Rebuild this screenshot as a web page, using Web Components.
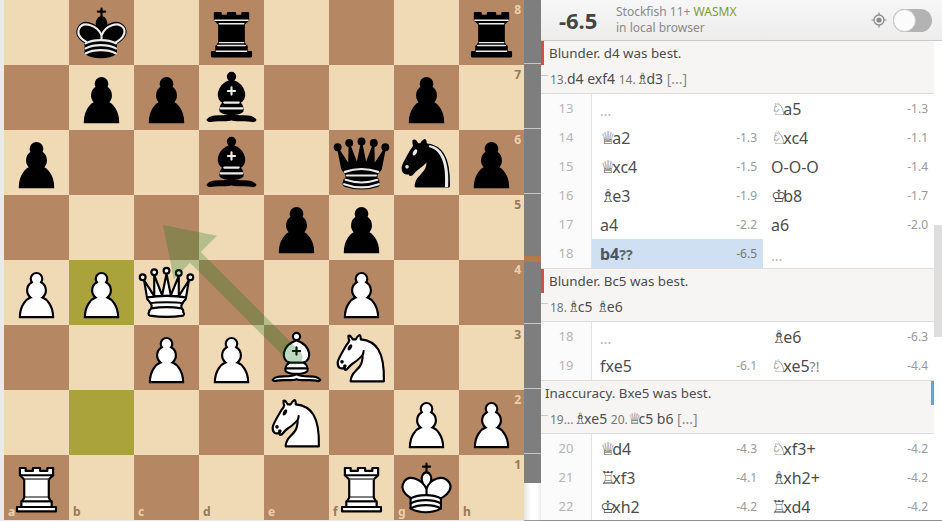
<!DOCTYPE html>
<html>
<head>
<meta charset="utf-8">
<title>Analysis</title>
<style>
  html, body { margin: 0; height: 521px; overflow: hidden; background: #e9eaee; }
  body { display: flex; font-family: "Noto Sans", "DejaVu Sans", sans-serif; color: #4d4d4d; }
</style>
</head>
<body>
<chess-board fen="1k1r3r/1ppb2p1/p2b1qnp/4pp2/PPQ2P2/2PPBN2/4N1PP/R4RK1"></chess-board>
<eval-gauge></eval-gauge>
<analysis-panel>
  <engine-header slot="header" score="-6.5"></engine-header>

  <move-comment kind="blunder" first title="Blunder. d4 was best.">
    <ply-num>13.</ply-num>d4 exf4 <ply-num>14.</ply-num><fig-piece>♗</fig-piece>d3 <ply-num fade>[...]</ply-num>
  </move-comment>
  <move-row n="13"><move-cell empty>...</move-cell><move-cell score="-1.3"><fig-piece>♘</fig-piece>a5</move-cell></move-row>
  <move-row n="14"><move-cell score="-1.3"><fig-piece>♕</fig-piece>a2</move-cell><move-cell score="-1.1"><fig-piece>♘</fig-piece>xc4</move-cell></move-row>
  <move-row n="15"><move-cell score="-1.5"><fig-piece>♕</fig-piece>xc4</move-cell><move-cell score="-1.4">O-O-O</move-cell></move-row>
  <move-row n="16"><move-cell score="-1.9"><fig-piece>♗</fig-piece>e3</move-cell><move-cell score="-1.7"><fig-piece>♔</fig-piece>b8</move-cell></move-row>
  <move-row n="17"><move-cell score="-2.2">a4</move-cell><move-cell score="-2.0">a6</move-cell></move-row>
  <move-row n="18"><move-cell score="-6.5" active glyph="??">b4</move-cell><move-cell empty>...</move-cell></move-row>

  <move-comment kind="blunder" title="Blunder. Bc5 was best.">
    <ply-num>18.</ply-num><fig-piece>♗</fig-piece>c5 <fig-piece>♗</fig-piece>e6
  </move-comment>
  <move-row n="18"><move-cell empty>...</move-cell><move-cell score="-6.3"><fig-piece>♗</fig-piece>e6</move-cell></move-row>
  <move-row n="19"><move-cell score="-6.1">fxe5</move-cell><move-cell score="-4.4" glyph="?!"><fig-piece>♘</fig-piece>xe5</move-cell></move-row>

  <move-comment kind="inaccuracy" title="Inaccuracy. Bxe5 was best.">
    <ply-num>19...</ply-num><fig-piece>♗</fig-piece>xe5 <ply-num>20.</ply-num><fig-piece>♕</fig-piece>c5 b6 <ply-num fade>[...]</ply-num>
  </move-comment>
  <move-row n="20"><move-cell score="-4.3"><fig-piece>♕</fig-piece>d4</move-cell><move-cell score="-4.2"><fig-piece>♘</fig-piece>xf3+</move-cell></move-row>
  <move-row n="21"><move-cell score="-4.1"><fig-piece>♖</fig-piece>xf3</move-cell><move-cell score="-4.2"><fig-piece>♗</fig-piece>xh2+</move-cell></move-row>
  <move-row n="22"><move-cell score="-4.2"><fig-piece>♔</fig-piece>xh2</move-cell><move-cell score="-4.2"><fig-piece>♖</fig-piece>xd4</move-cell></move-row>
</analysis-panel>

<script>
const outline = 'fill-rule="evenodd" stroke="#000" stroke-width="1.5" stroke-linecap="round" stroke-linejoin="round"';
const pawnPath = 'M22.5 9c-2.21 0-4 1.79-4 4 0 .89.29 1.71.78 2.38C17.33 16.5 16 18.59 16 21c0 2.03.94 3.84 2.41 5.03-3 1.06-7.41 5.55-7.41 13.47h23c0-7.92-4.41-12.41-7.41-13.47 1.47-1.19 2.41-3 2.41-5.03 0-2.41-1.33-4.5-3.28-5.62.49-.67.78-1.49.78-2.38 0-2.21-1.79-4-4-4z';
const knightBody = 'M22 10c10.5 1 16.5 8 16 29H15c0-9 10-6.5 8-21';
const knightHead = 'M24 18c.38 2.91-5.55 7.37-8 9-3 2-2.82 4.34-5 4-1.042-.94 1.41-3.04 0-3-1 0 .19 1.23-1 2-1 0-4.003 1-4-4 0-2 6-12 6-12s1.89-1.9 2-3.5c-.73-.994-.5-2-.5-3 1-1 3 2.5 3 2.5h2s.78-1.992 2.5-3c1 0 1 3 1 3';
const knightEye = 'M9.5 25.5a.5.5 0 1 1-1 0 .5.5 0 1 1 1 0zm5.433-9.75a.5 1.5 30 1 1-.866-.5.5 1.5 30 1 1 .866.5z';
const bishopBase = 'M9 36c3.39-.97 10.11.43 13.5-2 3.39 2.43 10.11 1.03 13.5 2 0 0 1.65.54 3 2-.68.97-1.65.99-3 .5-3.39-.97-10.11.46-13.5-1-3.39 1.46-10.11.03-13.5 1-1.354.49-2.323.47-3-.5 1.354-1.94 3-2 3-2z';
const bishopBody = 'M15 32c2.5 2.5 12.5 2.5 15 0 .5-1.5 0-2 0-2 0-2.5-2.5-4-2.5-4 5.5-1.5 6-11.5-5-15.5-11 4-10.5 14-5 15.5 0 0-2.5 1.5-2.5 4 0 0-.5.5 0 2z';
const bishopTop = 'M25 8a2.5 2.5 0 1 1-5 0 2.5 2.5 0 1 1 5 0z';
const bishopMarks = 'M17.5 26h10M15 30h15m-7.5-14.5v5M20 18h5';
const queenSkirt = 'M9 26c0 2 1.5 2 2.5 4 1 1.5 1 1 .5 3.5-1.5 1-1.5 2.5-1.5 2.5-1.5 1.5.5 2.5.5 2.5 6.5 1 16.5 1 23 0 0 0 1.5-1 0-2.5 0 0 .5-1.5-1-2.5-.5-2.5-.5-2 .5-3.5 1-2 2.5-2 2.5-4-8.5-1.5-18.5-1.5-27 0z';
const kingHead = 'M22.5 25s4.5-7.5 3-10.5c0 0-1-2.5-3-2.5s-3 2.5-3 2.5c-1.5 3 3 10.5 3 10.5';
const kingBody = 'M11.5 37c5.5 3.5 15.5 3.5 21 0v-7s9-4.5 6-10.5c-4-6.5-13.5-3.5-16 4V27v-3.5c-3.5-7.5-13-10.5-16-4-3 6 5 10 5 10V37z';
const kingBands = 'M11.5 30c5.5-3 15.5-3 21 0m-21 3.5c5.5-3 15.5-3 21 0m-21 3.5c5.5-3 15.5-3 21 0';

const PIECES = {
  P: `<path d="${pawnPath}" fill="#fff" stroke="#000" stroke-width="1.5" stroke-linecap="round"/>`,
  p: `<path d="${pawnPath}" fill="#000" stroke="#000" stroke-width="1.5" stroke-linecap="round"/>`,
  R: `<g fill="#fff" ${outline}><path d="M9 39h27v-3H9v3zM12 36v-4h21v4H12zM11 14V9h4v2h5V9h5v2h5V9h4v5" stroke-linecap="butt"/><path d="M34 14l-3 3H14l-3-3"/><path d="M31 17v12.5H14V17" stroke-linecap="butt" stroke-linejoin="miter"/><path d="M31 29.5l1.5 2.5h-20l1.5-2.5"/><path d="M11 14h23" fill="none" stroke-linejoin="miter"/></g>`,
  r: `<g ${outline}><path d="M9 39h27v-3H9v3zM12.5 32l1.5-2.5h17l1.5 2.5h-20zM12 36v-4h21v4H12z" stroke-linecap="butt"/><path d="M14 29.5v-13h17v13H14z" stroke-linecap="butt" stroke-linejoin="miter"/><path d="M14 16.5L11 14h23l-3 2.5H14zM11 14V9h4v2h5V9h5v2h5V9h4v5H11z" stroke-linecap="butt"/><path d="M12 35.5h21M13 31.5h19M14 29.5h17M14 16.5h17M11 14h23" fill="none" stroke="#ececec" stroke-width="1" stroke-linejoin="miter"/></g>`,
  B: `<g fill="none" ${outline}><g fill="#fff" stroke-linecap="butt"><path d="${bishopBase}"/><path d="${bishopBody}"/><path d="${bishopTop}"/></g><path d="${bishopMarks}" stroke-linejoin="miter"/></g>`,
  b: `<g fill="none" ${outline}><g fill="#000" stroke-linecap="butt"><path d="${bishopBase}"/><path d="${bishopBody}"/><path d="${bishopTop}"/></g><path d="${bishopMarks}" stroke="#ececec" stroke-linejoin="miter"/></g>`,
  N: `<g fill="none" ${outline}><path d="${knightBody}" fill="#fff"/><path d="${knightHead}" fill="#fff"/><path d="${knightEye}" fill="#000"/></g>`,
  n: `<g fill="none" ${outline}><path d="${knightBody}" fill="#000"/><path d="${knightHead}" fill="#000"/><path d="${knightEye}" fill="#ececec" stroke="#ececec"/><path d="M24.55 10.4l-.45 1.45.5.15c3.15 1 5.65 2.49 7.9 6.75S35.75 29.06 35.25 39l-.05.5h2.25l.05-.5c.5-10.06-.88-16.85-3.25-21.34-2.37-4.49-5.79-6.64-9.19-7.16l-.51-.1z" fill="#ececec" stroke="none"/></g>`,
  Q: `<g fill="#fff" ${outline}><path d="M8 12a2 2 0 1 1-4 0 2 2 0 1 1 4 0zM24.5 7.5a2 2 0 1 1-4 0 2 2 0 1 1 4 0zM41 12a2 2 0 1 1-4 0 2 2 0 1 1 4 0zM16 8.5a2 2 0 1 1-4 0 2 2 0 1 1 4 0zM33 9a2 2 0 1 1-4 0 2 2 0 1 1 4 0z"/><path d="M9 26c8.5-1.5 21-1.5 27 0l2-12-7 11V11l-5.5 13.5-3-15-3 15-5.5-14V25L7 14l2 12z" stroke-linecap="butt"/><path d="${queenSkirt}" stroke-linecap="butt"/><path d="M11.5 30c3.5-1 18.5-1 22 0M12 33.5c6-1 15-1 21 0" fill="none"/></g>`,
  q: `<g ${outline}><g stroke="none"><circle cx="6" cy="12" r="2.75"/><circle cx="14" cy="9" r="2.75"/><circle cx="22.5" cy="8" r="2.75"/><circle cx="31" cy="9" r="2.75"/><circle cx="39" cy="12" r="2.75"/></g><path d="M9 26c8.5-1.5 21-1.5 27 0l2.5-12.5L31 25l-.3-14.1-5.2 13.6-3-14.5-3 14.5-5.2-13.6L14 25 6.5 13.5 9 26z" stroke-linecap="butt"/><path d="${queenSkirt}" stroke-linecap="butt"/><path d="M11 38.5a35 35 1 0 0 23 0" fill="none" stroke-linecap="butt"/><path d="M11 29a35 35 1 0 1 23 0M12.5 31.5h20M11.5 34.5a35 35 1 0 0 22 0M10.5 37.5a35 35 1 0 0 24 0" fill="none" stroke="#ececec"/></g>`,
  K: `<g fill="none" ${outline}><path d="M22.5 11.63V6M20 8h5" stroke-linejoin="miter"/><path d="${kingHead}" fill="#fff" stroke-linecap="butt" stroke-linejoin="miter"/><path d="${kingBody}" fill="#fff"/><path d="${kingBands}"/></g>`,
  k: `<g fill="none" ${outline}><path d="M22.5 11.63V6" stroke-linejoin="miter"/><path d="${kingHead}" fill="#000" stroke-linecap="butt" stroke-linejoin="miter"/><path d="${kingBody}" fill="#000"/><path d="M20 8h5" stroke-linejoin="miter"/><path d="M32 29.5s8.5-4 6.03-9.65C34.15 14 25 18 22.5 24.5l.01 2.1-.01-2.1C20 18 9.906 14 6.997 19.85c-2.497 5.65 4.853 9 4.853 9" stroke="#ececec"/><path d="${kingBands}" stroke="#ececec"/></g>`
};

class ChessPiece extends HTMLElement {
  constructor() {
    super();
    this.shadow = this.attachShadow({ mode: "open" });
    this.shadow.innerHTML = `
      <style>
        :host { display: block; width: 65px; height: 65px; }
        svg { display: block; width: 65px; height: 65px; }
      </style>
      <svg viewBox="0 0 45 45">${PIECES[this.getAttribute('type')]}</svg>
    `;
  }
}
customElements.define('chess-piece', ChessPiece);

class BoardSquare extends HTMLElement {
  constructor() {
    super();
    this.shadow = this.attachShadow({ mode: "open" });
    const rank = this.getAttribute('rank');
    const file = this.getAttribute('file');
    this.shadow.innerHTML = `
      <style>
        :host { display: block; position: relative; width: 65px; height: 65px; background: #f0d9b5; --coord: #8f6f52; }
        :host([dark]) { background: #b58863; --coord: #f0d9b5; }
        :host([last]) { background: #aaa23a; }
        .coord { position: absolute; font: bold 12px/12px "Noto Sans", sans-serif; color: var(--coord); opacity: .9; }
        .rank { top: 4px; right: 3px; }
        .file { bottom: 2px; left: 4px; }
      </style>
      <slot></slot>
      ${rank ? `<span class="coord rank">${rank}</span>` : ''}
      ${file ? `<span class="coord file">${file}</span>` : ''}
    `;
  }
}
customElements.define('board-square', BoardSquare);

class ChessBoard extends HTMLElement {
  constructor() {
    super();
    this.shadow = this.attachShadow({ mode: "open" });
    const files = 'abcdefgh';
    let squares = '';
    this.getAttribute('fen').split('/').forEach((row, r) => {
      const cells = row.replace(/\d/g, d => '.'.repeat(+d));
      [...cells].forEach((c, f) => {
        let attrs = '';
        if ((r + f) % 2 === 1) attrs += ' dark';
        if (f === 7) attrs += ` rank="${8 - r}"`;
        if (r === 7) attrs += ` file="${files[f]}"`;
        if (f === 1 && (r === 4 || r === 6)) attrs += ' last';
        squares += `<board-square${attrs}>${c !== '.' ? `<chess-piece type="${c}"></chess-piece>` : ''}</board-square>`;
      });
    });
    this.shadow.innerHTML = `
      <style>
        :host { display: block; position: relative; flex: none; width: 520px; height: 520px; margin-left: 4px; }
        .grid { display: grid; grid-template-columns: repeat(8, 65px); grid-auto-rows: 65px; }
        svg { position: absolute; left: -4px; top: 0; width: 528px; height: 520px; pointer-events: none; }
      </style>
      <div class="grid">${squares}</div>
      <svg viewBox="0 0 528 520">
        <g opacity=".27">
          <line x1="295" y1="357" x2="195.4" y2="257.4" stroke="#15781b" stroke-width="15.2" stroke-linecap="round"/>
          <polygon points="163,225 217,235.8 173.8,279" fill="#15781b"/>
        </g>
      </svg>
    `;
  }
}
customElements.define('chess-board', ChessBoard);

class EvalGauge extends HTMLElement {
  constructor() {
    super();
    this.shadow = this.attachShadow({ mode: "open" });
    this.shadow.innerHTML = `
      <style>
        :host { display: flex; flex-direction: column; position: relative; flex: none; width: 17px; height: 520px; border-bottom: 1px solid #999; }
        .black { height: 483px; background: repeating-linear-gradient(#7e7e7e 0 63px, #c6c6c6 63px 64px, #7e7e7e 64px 65px); }
        .white { flex: 1; background: linear-gradient(90deg, #e4e4e4, #fff 40%, #fff 80%, #e8e8e8); }
        .mark { position: absolute; left: 0; right: 0; top: 256px; height: 6px; background: #b5774c; }
      </style>
      <div class="black"></div>
      <div class="white"></div>
      <div class="mark"></div>
    `;
  }
}
customElements.define('eval-gauge', EvalGauge);

class EngineHeader extends HTMLElement {
  constructor() {
    super();
    this.shadow = this.attachShadow({ mode: "open" });
    this.shadow.innerHTML = `
      <style>
        :host { display: flex; align-items: center; height: 40px; border-bottom: 1px solid #c9c9c9; background: linear-gradient(#f7f7f7, #ececec); font-family: "Noto Sans", sans-serif; }
        .score { width: 57px; margin-left: 18px; font-size: 22px; font-weight: 700; color: #444; line-height: 40px; }
        .info { flex: 1; font-size: 12px; line-height: 16px; color: #8a8a8a; }
        .info b { font-weight: 400; color: #7d9a3e; }
        .target { display: block; width: 16px; height: 16px; margin-right: 6px; }
        .toggle { position: relative; width: 39px; height: 23px; margin-right: 10px; border-radius: 12px; background: #b3b3b3; }
        .knob { position: absolute; left: 0; top: 0; width: 21px; height: 21px; border: 1px solid #c8c8c8; border-radius: 50%; background: #fbfbfb; }
      </style>
      <div class="score">${this.getAttribute('score')}</div>
      <div class="info">Stockfish 11+ <b>WASMX</b><br>in local browser</div>
      <svg class="target" viewBox="0 0 16 16">
        <circle cx="8" cy="8" r="5" fill="none" stroke="#8a8a8a" stroke-width="1.3"/>
        <circle cx="8" cy="8" r="2.6" fill="#8a8a8a"/>
        <path d="M8 .5v2.5M8 13v2.5M.5 8H3M13 8h2.5" stroke="#8a8a8a" stroke-width="1.2"/>
      </svg>
      <div class="toggle"><div class="knob"></div></div>
    `;
  }
}
customElements.define('engine-header', EngineHeader);

// no whitespace around the slot: it would show up as a space in the move text
class FigPiece extends HTMLElement {
  constructor() {
    super();
    this.shadow = this.attachShadow({ mode: "open" });
    this.shadow.innerHTML = `<style>
        :host { display: inline; font-family: "DejaVu Sans", sans-serif; font-size: 1.1em; line-height: 1; letter-spacing: -.2em; }
      </style><slot></slot>`;
  }
}
customElements.define('fig-piece', FigPiece);

class PlyNum extends HTMLElement {
  constructor() {
    super();
    this.shadow = this.attachShadow({ mode: "open" });
    this.shadow.innerHTML = `<style>
        :host { display: inline; font-size: 12px; color: #777; }
        :host([fade]) { font-size: 14px; color: #888; }
      </style><slot></slot>`;
  }
}
customElements.define('ply-num', PlyNum);

class MoveComment extends HTMLElement {
  constructor() {
    super();
    this.shadow = this.attachShadow({ mode: "open" });
    this.shadow.innerHTML = `
      <style>
        :host { display: block; position: relative; box-sizing: border-box; border-top: 1px solid #ddd; border-bottom: 1px solid #ddd; background: #f6f5f4; color: #4d4d4d; }
        :host([first]) { border-top: none; }
        .title { height: 24px; padding-left: 8px; font-size: 13.35px; line-height: 24px; }
        :host([kind="inaccuracy"]) .title { padding-left: 4px; }
        .line { height: 28px; padding-left: 9px; font-size: 14px; line-height: 27px; white-space: nowrap; }
        .flag { position: absolute; top: 0; left: 0; width: 3px; height: 24px; background: #cf4f4f; }
        :host([kind="inaccuracy"]) .flag { left: auto; right: 0; background: #5ba6dc; }
        .tick { position: absolute; top: 34px; left: 0; width: 7px; height: 1px; background: #c8c8c8; }
      </style>
      <div class="flag"></div>
      <div class="tick"></div>
      <div class="title">${this.getAttribute('title')}</div>
      <div class="line"><slot></slot></div>
    `;
  }
}
customElements.define('move-comment', MoveComment);

class MoveCell extends HTMLElement {
  constructor() {
    super();
    this.shadow = this.attachShadow({ mode: "open" });
    const score = this.getAttribute('score');
    const glyph = this.getAttribute('glyph');
    this.shadow.innerHTML = `
      <style>
        :host { display: flex; align-items: center; box-sizing: border-box; padding: 0 6px 0 8px; height: 29px; font-size: 16px; color: #4d4d4d; white-space: nowrap; }
        :host([empty]) { color: #b5b5b5; font-size: 14px; padding-top: 3px; }
        :host([active]) { background: #cee0f1; font-weight: 700; color: #4c5660; }
        .san { flex: 1; }
        .glyph { font-size: 14px; font-weight: 400; color: #888; }
        :host([active]) .glyph { font-weight: 700; color: #666; }
        .score { font-size: 12px; color: #9a9a9a; font-weight: 400; }
        :host([active]) .score { color: #777; }
      </style>
      <div class="san"><slot></slot>${glyph ? `<span class="glyph">${glyph}</span>` : ''}</div>
      ${score ? `<div class="score">${score}</div>` : ''}
    `;
  }
}
customElements.define('move-cell', MoveCell);

class MoveRow extends HTMLElement {
  constructor() {
    super();
    this.shadow = this.attachShadow({ mode: "open" });
    this.shadow.innerHTML = `
      <style>
        :host { display: grid; grid-template-columns: 51px 171px 171px; height: 29px; background: #fff; }
        .index { box-sizing: border-box; border-right: 1px solid #e2e2e2; background: #fbfbfb; font-size: 13px; line-height: 28px; color: #b5b5b5; text-align: center; }
      </style>
      <div class="index">${this.getAttribute('n')}</div>
      <slot></slot>
    `;
  }
}
customElements.define('move-row', MoveRow);

class AnalysisPanel extends HTMLElement {
  constructor() {
    super();
    this.shadow = this.attachShadow({ mode: "open" });
    this.shadow.innerHTML = `
      <style>
        :host { display: flex; flex-direction: column; flex: none; box-sizing: border-box; width: 401px; height: 521px; border-bottom: 1px solid #8f8f8f; background: #fff; overflow: hidden; box-shadow: -1px 0 2px rgba(0,0,0,.15); }
        .body { display: flex; flex: 1; min-height: 0; }
        .moves { flex: none; width: 393px; }
        .track { flex: none; width: 8px; }
        .thumb { height: 112px; margin-top: 184px; background: #dedede; }
      </style>
      <slot name="header"></slot>
      <div class="body">
        <div class="moves"><slot></slot></div>
        <div class="track"><div class="thumb"></div></div>
      </div>
    `;
  }
}
customElements.define('analysis-panel', AnalysisPanel);
</script>
</body>
</html>
